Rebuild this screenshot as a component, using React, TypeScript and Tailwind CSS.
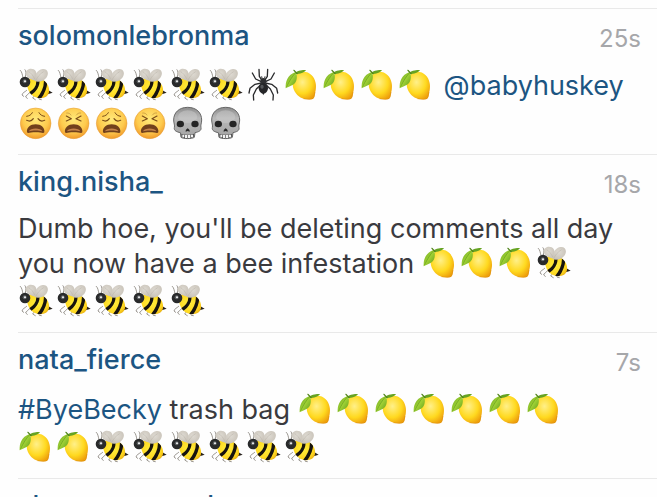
import { type ReactNode } from "react";

type EmojiName = "bee" | "spider" | "lemon" | "weary" | "tired" | "skull";

interface Comment {
  user: string;
  time?: string;
  body?: ReactNode;
}

// Shared gradients, mounted once and referenced by every emoji.
function EmojiDefs() {
  return (
    <svg className="absolute size-0" aria-hidden>
      <defs>
        <radialGradient id="face" cx="50%" cy="38%" r="62%">
          <stop offset="0" stopColor="#ffe97a" />
          <stop offset="0.65" stopColor="#fecb4e" />
          <stop offset="1" stopColor="#f19a2b" />
        </radialGradient>
        <radialGradient id="lemon" cx="42%" cy="38%" r="68%">
          <stop offset="0" stopColor="#fff08a" />
          <stop offset="0.6" stopColor="#ffd91f" />
          <stop offset="1" stopColor="#ee9f0c" />
        </radialGradient>
        <linearGradient id="leaf" x1="0" y1="0" x2="1" y2="1">
          <stop offset="0" stopColor="#6aa71d" />
          <stop offset="0.5" stopColor="#9fd035" />
          <stop offset="1" stopColor="#5c9a17" />
        </linearGradient>
        <radialGradient id="bee-body" cx="45%" cy="45%" r="70%">
          <stop offset="0" stopColor="#ffee3d" />
          <stop offset="0.7" stopColor="#fed61f" />
          <stop offset="1" stopColor="#e0a010" />
        </radialGradient>
        <radialGradient id="wing" cx="45%" cy="40%" r="60%">
          <stop offset="0" stopColor="#dedad2" />
          <stop offset="1" stopColor="#c9c3b9" />
        </radialGradient>
        <linearGradient id="skull" x1="0" y1="0" x2="0" y2="1">
          <stop offset="0" stopColor="#8c8c8c" />
          <stop offset="0.35" stopColor="#b9b9b9" />
          <stop offset="1" stopColor="#a2a2a2" />
        </linearGradient>
        <clipPath id="bee-clip">
          <path d="M30 38C40 30 60 30 75 39C88 47 95 61 93 75C90 93 70 97 53 91C34 84 22 58 30 38Z" />
        </clipPath>
      </defs>
    </svg>
  );
}

function Bee() {
  return (
    <>
      <g fill="none" stroke="#6a645b" strokeWidth="2" strokeLinecap="round">
        <path d="M15 32C13 24 12 14 7 10M22 30C24 20 25 12 21 8" />
        <path d="M26 70C20 76 14 76 12 84L17 88M34 78C30 84 24 84 23 90L28 94M48 88L44 93L52 98M62 92L64 97L70 98" />
      </g>
      <path d="M90 69L104 77L89 82Z" fill="#26201a" />
      <path
        d="M30 38C40 30 60 30 75 39C88 47 95 61 93 75C90 93 70 97 53 91C34 84 22 58 30 38Z"
        fill="url(#bee-body)"
      />
      {/* two wide bands, the second wrapping the tail */}
      <g clipPath="url(#bee-clip)" fill="none" stroke="#17130f">
        <path d="M57 26C64 46 58 68 33 82" strokeWidth="10" />
        <path d="M82 36C85 56 78 76 60 98" strokeWidth="10" />
      </g>
      <path d="M52 41C40 39 23 31 23 19C24 4 45 1 53 12C58 22 57 33 52 41Z" fill="url(#wing)" />
      <path d="M52 43C48 26 57 8 74 6C90 5 94 21 85 32C77 42 64 46 52 43Z" fill="url(#wing)" />
      <path d="M53 41C58 30 66 20 77 14M50 36C46 26 38 17 32 14" fill="none" stroke="#b9b3a8" strokeWidth="1.5" />
      <circle cx="21" cy="45" r="16" fill="#292a2b" />
      <circle cx="20" cy="43" r="6" fill="#5a5e60" />
      <circle cx="21" cy="43" r="3" fill="#f4f4f4" />
    </>
  );
}

function Spider() {
  return (
    <>
      <g fill="none" stroke="#292a2c" strokeWidth="4" strokeLinecap="round" strokeLinejoin="round">
        <path d="M48 40L40 28L39 7M56 40L64 28L65 7" />
        <path d="M46 44L29 36L19 18M58 44L75 36L85 18" />
        <path d="M46 48L27 52L12 64L9 78M58 48L77 52L92 64L95 78" />
        <path d="M46 52L31 66L22 84L23 99M58 52L73 66L82 84L81 99" />
      </g>
      <ellipse cx="52" cy="43" rx="9" ry="10" fill="#2f3032" />
      <path d="M48 34L47 28M56 34L57 28" stroke="#292a2c" strokeWidth="3" />
      <ellipse cx="52" cy="64" rx="14" ry="16" fill="#252628" />
      <path d="M49 78L52 85L55 78Z" fill="#252628" />
      <ellipse cx="48" cy="59" rx="5" ry="6" fill="#55585b" />
    </>
  );
}

function Lemon() {
  return (
    <>
      <path
        d="M35 27C43 12 68 9 83 25C95 37 98 55 95 70C92 80 94 91 87 96C79 98 70 97 61 96C45 92 32 80 27 61C24 47 28 36 35 27Z"
        fill="url(#lemon)"
      />
      <path d="M58 95C72 97 82 98 87 94C91 90 91 84 93 75" fill="none" stroke="#d88b12" strokeWidth="2" opacity="0.7" />
      <path d="M33 18C43 9 55 9 66 9C61 17 47 21 36 21Z" fill="#66a322" />
      <path d="M36 14C41 29 39 46 27 53C19 58 10 60 5 64C4 45 9 24 36 14Z" fill="url(#leaf)" />
      <path d="M35 17C26 27 17 40 7 61" fill="none" stroke="#538e18" strokeWidth="1.5" />
      <path d="M30 10L39 20" stroke="#50831b" strokeWidth="4" strokeLinecap="round" />
    </>
  );
}

function Face({ tired }: { tired?: boolean }) {
  return (
    <>
      <circle cx="53" cy="55" r="46" fill="url(#face)" stroke="#e39a35" strokeWidth="1.5" />
      <g fill="none" stroke="#7a4c18" strokeWidth="3.5" strokeLinecap="round" strokeLinejoin="round">
        {tired ? (
          <>
            <path d="M31 33L46 41L31 48M75 33L60 41L75 48" />
            <path d="M32 24C38 23 42 26 45 30M74 24C68 23 64 26 61 30" strokeWidth="2" opacity="0.5" />
          </>
        ) : (
          <>
            <path d="M26 46C34 50 42 47 46 41M80 46C72 50 64 47 60 41" />
            <path d="M26 34C34 33 40 29 43 23M80 34C72 33 66 29 63 23" strokeWidth="3" />
          </>
        )}
      </g>
      <path d="M27 82C25 68 37 58 53 58C69 58 81 68 79 82C77 86 69 82 53 82C37 82 29 86 27 82Z" fill="#71401c" />
      <path d="M33 79C37 68 69 68 73 79C62 76 44 76 33 79Z" fill="#c4824a" />
    </>
  );
}

function Skull() {
  return (
    <>
      <path
        d="M53 7C80 7 95 24 95 45C95 54 91 61 93 68C95 77 85 81 75 83L73 97C66 102 40 102 33 97L31 83C21 81 11 77 13 68C15 61 11 54 11 45C11 24 26 7 53 7Z"
        fill="url(#skull)"
        stroke="#686868"
        strokeWidth="3"
      />
      <ellipse cx="53" cy="35" rx="29" ry="19" fill="#cbcbcb" opacity="0.5" />
      <ellipse cx="31" cy="57" rx="11" ry="10" fill="#242424" />
      <ellipse cx="75" cy="57" rx="11" ry="10" fill="#242424" />
      <path d="M53 70C57 72 60 77 59 80L53 78L47 80C46 77 49 72 53 70Z" fill="#292929" />
      <path d="M34 86C44 90 62 90 72 86L71 96C62 101 44 101 35 96Z" fill="#4a4a4a" />
      <path d="M37 89H43V97H37ZM45 90H52V99H45ZM54 90H61V99H54ZM63 89H69V97H63Z" fill="#f3f3f3" />
    </>
  );
}

const EMOJI: Record<EmojiName, ReactNode> = {
  bee: <Bee />,
  spider: <Spider />,
  lemon: <Lemon />,
  weary: <Face />,
  tired: <Face tired />,
  skull: <Skull />,
};

// A run of the same emoji; each one is an inline glyph so runs wrap with the text.
function Emoji({ name, count = 1 }: { name: EmojiName; count?: number }) {
  return Array.from({ length: count }, (_, i) => (
    <svg
      key={i}
      viewBox="0 0 114 114"
      role="img"
      aria-label={name}
      className="inline-block size-[38px] align-[-10px]"
    >
      {EMOJI[name]}
    </svg>
  ));
}

function TextLink({ children }: { children: string }) {
  return (
    <a href="#" className="text-[#1c5582]">
      {children}
    </a>
  );
}

const COMMENTS: Comment[] = [
  {
    user: "solomonlebronma",
    time: "25s",
    body: (
      <>
        <Emoji name="bee" count={6} />
        <Emoji name="spider" />
        <Emoji name="lemon" count={4} /> <TextLink>@babyhuskey</TextLink>
        <br />
        <Emoji name="weary" />
        <Emoji name="tired" />
        <Emoji name="weary" />
        <Emoji name="tired" />
        <Emoji name="skull" count={2} />
      </>
    ),
  },
  {
    user: "king.nisha_",
    time: "18s",
    body: (
      <>
        Dumb hoe, you'll be deleting comments all day
        <br />
        you now have a bee infestation <Emoji name="lemon" count={3} />
        <Emoji name="bee" />
        <br />
        <Emoji name="bee" count={5} />
      </>
    ),
  },
  {
    user: "nata_fierce",
    time: "7s",
    body: (
      <>
        <TextLink>#ByeBecky</TextLink> trash bag <Emoji name="lemon" count={7} />
        <br />
        <Emoji name="lemon" count={2} />
        <Emoji name="bee" count={6} />
      </>
    ),
  },
  // Next comment, still scrolled below the fold.
  { user: "shaunaeeeeanh" },
];

function CommentRow({ user, time, body }: Comment) {
  return (
    <li className="border-t border-[#e9e9e9] pt-2 pb-[11px]">
      <header className="flex items-end justify-between pr-4">
        <a href="#" className="text-[27px] leading-[38px] font-medium text-[#1c5582]">
          {user}
        </a>
        {time ? <time className="text-2xl text-[#a6a7aa]">{time}</time> : null}
      </header>
      {body ? <p className="mt-3 text-[27px] leading-8 text-[#3a3a3e]">{body}</p> : null}
    </li>
  );
}

export default function App() {
  return (
    <main className="h-screen overflow-hidden bg-[#fefefe] pt-2 pl-[18px] font-[Inter,sans-serif]">
      <EmojiDefs />
      <ul>
        {COMMENTS.map((comment) => (
          <CommentRow key={comment.user} {...comment} />
        ))}
      </ul>
    </main>
  );
}
